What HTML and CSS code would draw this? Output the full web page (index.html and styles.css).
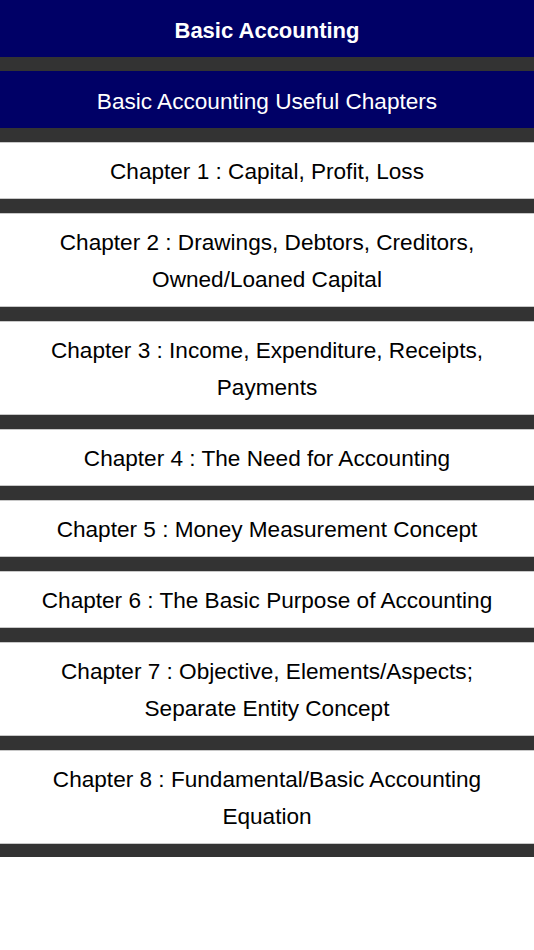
FILE: index.html
```html
<!DOCTYPE html>
<html>
<head>
<meta charset="utf-8">
<title>Basic Accounting</title>
<link rel="stylesheet" href="styles.css">
</head>
<body>
<div class="page">
  <div class="bar title">Basic Accounting</div>
  <div class="bar subtitle">Basic Accounting Useful Chapters</div>
  <div class="item">Chapter 1 : Capital, Profit, Loss</div>
  <div class="item">Chapter 2 : Drawings, Debtors, Creditors, Owned/Loaned Capital</div>
  <div class="item">Chapter 3 : Income, Expenditure, Receipts, Payments</div>
  <div class="item">Chapter 4 : The Need for Accounting</div>
  <div class="item">Chapter 5 : Money Measurement Concept</div>
  <div class="item">Chapter 6 : The Basic Purpose of Accounting</div>
  <div class="item">Chapter 7 : Objective, Elements/Aspects; Separate Entity Concept</div>
  <div class="item">Chapter 8 : Fundamental/Basic Accounting Equation</div>
</div>
</body>
</html>
```
FILE: styles.css
```css
html, body {
  margin: 0;
  padding: 0;
  background: #ffffff;
}
body {
  font-family: "Liberation Sans", Arial, sans-serif;
}
.page {
  background: #333333;
  display: flex;
  flex-direction: column;
  gap: 14px;
  padding-bottom: 13px;
}
.bar {
  background: #000066;
  color: #ffffff;
  text-align: center;
  height: 55px;
  padding-top: 2px;
  line-height: 57px;
  font-size: 22.6px;
}
.title {
  font-weight: bold;
  font-size: 22px;
}
.item {
  background: #ffffff;
  color: #000000;
  border-top: 1px solid #c8c8c8;
  border-bottom: 1px solid #c8c8c8;
  padding: 10px 24px 8px;
  text-align: center;
  font-size: 22.6px;
  line-height: 37px;
}
```
